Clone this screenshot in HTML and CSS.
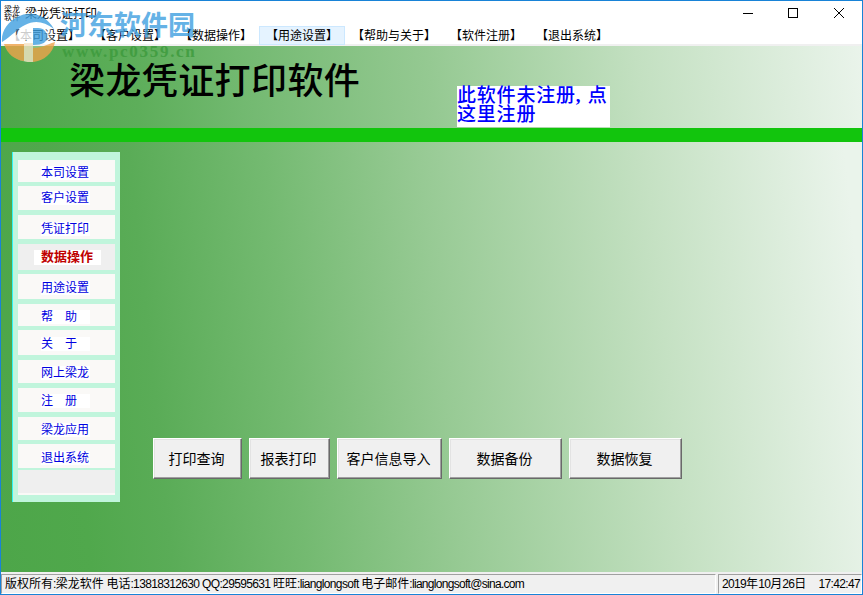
FILE: index.html
```html
<!DOCTYPE html>
<html lang="zh-CN">
<head>
    <meta charset="UTF-8">
    <title>梁龙凭证打印</title>
    <link rel="stylesheet" href="styles.css">
</head>
<body>
    <div class="window">
        <div class="titlebar">
            <div class="app-icon"><span>梁龙</span><span>软件</span></div>
            <span class="caption">梁龙凭证打印</span>
            <svg class="controls" width="120" height="24" viewBox="0 0 120 24" fill="none" stroke="#000">
                <path d="M0 12.5h10"/>
                <rect x="45.5" y="7.5" width="9" height="9"/>
                <path d="M91 7l10 10M101 7l-10 10"/>
            </svg>
        </div>

        <div class="menubar">
            <span>【本司设置】</span>
            <span>【客户设置】</span>
            <span>【数据操作】</span>
            <span class="hover">【用途设置】</span>
            <span>【帮助与关于】</span>
            <span>【软件注册】</span>
            <span>【退出系统】</span>
        </div>

        <div class="banner">
            <h1>梁龙凭证打印软件</h1>
            <div class="notice">此软件未注册<i>,</i>点<br>这里注册</div>
        </div>
        <div class="stripe"></div>

        <div class="main">
            <div class="sidebar">
                <div class="item"><b>本司设置</b></div>
                <div class="item"><b>客户设置</b></div>
                <div class="item"><b>凭证打印</b></div>
                <div class="item active"><b>数据操作</b></div>
                <div class="item"><b>用途设置</b></div>
                <div class="item"><b>帮　助</b></div>
                <div class="item"><b>关　于</b></div>
                <div class="item"><b>网上梁龙</b></div>
                <div class="item"><b>注　册</b></div>
                <div class="item"><b>梁龙应用</b></div>
                <div class="item"><b>退出系统</b></div>
                <div class="item blank"></div>
            </div>
            <div class="buttons">
                <button class="btn">打印查询</button>
                <button class="btn report">报表打印</button>
                <button class="btn import">客户信息导入</button>
                <button class="btn wide">数据备份</button>
                <button class="btn wide">数据恢复</button>
            </div>
        </div>

        <div class="statusbar">
            <div class="panel info">版权所有<em>:</em>梁龙软件<em> </em>电话<em>:13818312630 QQ:29595631 </em>旺旺<em>:lianglongsoft </em>电子邮件<em class="mail">:lianglongsoft@sina.com</em></div>
            <div class="panel clock"><span><em>2019</em>年<em>10</em>月<em>26</em>日</span><em>17:42:47</em></div>
        </div>
    </div>

    <!-- 水印 -->
    <div class="watermark">
        <svg width="64" height="66" viewBox="0 0 64 66">
            <circle cx="29" cy="38" r="24" fill="#fff" fill-opacity="0.4"/>
            <path d="M4 44h20v17c-9-1-17-7-20-17z" fill="#f0a44c"/>
            <path d="M33 48c7 0 13-3 22-6-2 11-11 19-22 20z" fill="#f0a44c"/>
            <path d="M24 43h9v19c-4 0-7 0-9-1z" fill="#f6e6c8"/>
            <path d="M2 42C1 31 8 22 17 17c13-7 29-3 37 12-10-8-20-9-29-4-8 4-12 10-23 17z" fill="#3f9fe0"/>
            <path d="M11 40l13-12h9v12z" fill="#fff"/>
            <path d="M33 28h5c6 0 9 4 9 9s-4 8-14 8z" fill="#3f9fe0"/>
        </svg>
        <div class="wm-name">河东软件园</div>
        <div class="wm-url">www.pc0359.cn</div>
    </div>
</body>
</html>
```
FILE: styles.css
```css
* {
    box-sizing: border-box;
}

body {
    margin: 0;
    font-family: "Liberation Sans", "Noto Sans CJK SC", sans-serif;
    font-size: 12px;
    color: #000;
    overflow: hidden;
}

em, i {
    font-style: normal;
}

.window {
    width: 863px;
    height: 595px;
    border: 1px solid #1883d7;
    background: #fff;
    display: flex;
    flex-direction: column;
}

/* 标题栏 */
.titlebar {
    height: 25px;
    display: flex;
    align-items: center;
    padding-left: 3px;
    flex: none;
}

.app-icon {
    width: 16px;
    display: flex;
    flex-direction: column;
    font-size: 8px;
    line-height: 8px;
}

.caption {
    margin-left: 5px;
    line-height: 24px;
}

.controls {
    margin-left: auto;
    margin-right: -1px;
    position: relative;
    top: -1px;
}

/* 菜单 */
.menubar {
    height: 20px;
    display: flex;
    border-bottom: 2px solid #f0f0f0;
    flex: none;
}

.menubar span {
    height: 19px;
    padding: 0 6px;
    border: 1px solid transparent;
    line-height: 19px;
    white-space: nowrap;
}

.menubar .hover {
    background: #e5f3ff;
    border-color: #cce8ff;
}

/* 横幅 */
.banner {
    height: 82px;
    flex: none;
    display: flex;
    align-items: flex-start;
    background: linear-gradient(84deg, #4da649 0%, #5dae5a 16%, #72b970 28%, #95c992 50%, #c3e0c1 74%, #eaf4eb 100%);
}

h1 {
    margin: 11px 0 0 68px;
    width: 388px;
    font-family: "Noto Sans CJK SC", sans-serif;
    font-size: 36px;
    font-weight: 500;
    line-height: 42px;
    letter-spacing: 0.4px;
}

.notice {
    margin-top: 40px;
    width: 153px;
    height: 41px;
    background: #fff;
    color: #00f;
    font-family: "Liberation Serif", "Noto Sans CJK SC", serif;
    font-size: 19px;
    line-height: 19px;
    letter-spacing: 0.8px;
    font-weight: 500;
    white-space: nowrap;
}

.notice i {
    display: inline-block;
    width: 12px;
    font-weight: bold;
}

.stripe {
    height: 14px;
    flex: none;
    background: #12c50d;
}

/* 主区域 */
.main {
    height: 430px;
    flex: none;
    display: flex;
    align-items: flex-start;
    padding: 10px 0 0 11px;
    background: linear-gradient(84deg, #4da649 0%, #50a84c 10%, #5aac57 19%, #74ba71 34%, #97ca94 51%, #c5e1c3 76%, #eaf4eb 98%);
}

.sidebar {
    width: 108px;
    height: 350px;
    padding: 8px 5px 0;
    background: #c0f5dc;
    border-left: 1px solid #2ff5f5;
}

.item {
    height: 24px;
    margin-bottom: 4px;
    padding-left: 23px;
    background: #faf9f7;
    color: #0000e0;
    display: flex;
    align-items: center;
}

.item b {
    width: 49px;
    height: 14px;
    line-height: 15px;
    font-weight: 400;
    background: #fff;
    white-space: nowrap;
}

.item:nth-child(1) { height: 22px; padding-top: 3px; }
.item:nth-child(2) { margin-bottom: 5px; }
.item:nth-child(3) { margin-bottom: 5px; padding-top: 3px; }
.item:nth-child(5) { height: 25px; margin-bottom: 5px; padding-top: 2px; }
.item:nth-child(6) { height: 22px; padding-top: 3px; }
.item:nth-child(7) { height: 25px; margin-bottom: 5px; padding-top: 2px; }
.item:nth-child(8) { height: 23px; margin-bottom: 5px; padding-top: 2px; }
.item:nth-child(9) { margin-bottom: 5px; padding-top: 2px; }
.item:nth-child(10) { height: 23px; padding-top: 2px; }
.item:nth-child(11) { margin-bottom: 2px; padding-top: 3px; }

.item.active {
    height: 26px;
    background: #efefef;
    padding-left: 16px;
}

.item.active b {
    width: 67px;
    height: 15px;
    line-height: 14px;
    padding-left: 7px;
    font-size: 13px;
    font-weight: bold;
    color: #c00000;
}

.item.blank {
    height: 25px;
    background: #efefef;
    border-bottom: 2px solid #faf9f7;
}

.buttons {
    display: flex;
    gap: 7px;
    margin: 286px 0 0 33px;
}

.btn {
    width: 89px;
    height: 41px;
    padding: 0 2px 2px 0;
    font-family: inherit;
    font-size: 14px;
    color: #000;
    background: #f0f0f0;
    border: 1px solid;
    border-color: #fff #696969 #696969 #fff;
    box-shadow: inset -1px -1px #a0a0a0, inset 1px 1px #e3e3e3;
    white-space: nowrap;
}

.btn.report { width: 81px; }
.btn.import { width: 105px; }
.btn.wide { width: 113px; }

/* 状态栏 */
.statusbar {
    height: 22px;
    flex: none;
    display: flex;
    gap: 2px;
    padding-top: 2px;
    background: #f0f0f0;
}

.panel {
    height: 20px;
    border: 1px solid;
    border-color: #a0a0a0 #fff #fff #a0a0a0;
    line-height: 18px;
    white-space: pre;
}

.panel em {
    letter-spacing: -0.65px;
}

.panel .mail {
    letter-spacing: -0.7px;
}

.info {
    width: 715px;
    padding-left: 3px;
}

.clock {
    flex: 1;
    padding: 0 1px 0 3px;
    display: flex;
    justify-content: space-between;
    overflow: hidden;
}

/* 水印 */
.watermark {
    position: absolute;
    left: 0;
    top: 0;
    width: 200px;
    height: 66px;
    opacity: 0.8;
}

.watermark svg {
    position: absolute;
    left: 0;
    top: 0;
}

.wm-name {
    position: absolute;
    left: 60px;
    top: 9px;
    font-size: 27px;
    line-height: 34px;
    font-weight: bold;
    color: #3f9fe0;
    white-space: nowrap;
}

.wm-url {
    position: absolute;
    left: 62px;
    top: 43px;
    font-family: "Liberation Serif", serif;
    font-size: 17px;
    line-height: 18px;
    letter-spacing: 1.7px;
    font-weight: bold;
    color: #3c9a3c;
}
```
